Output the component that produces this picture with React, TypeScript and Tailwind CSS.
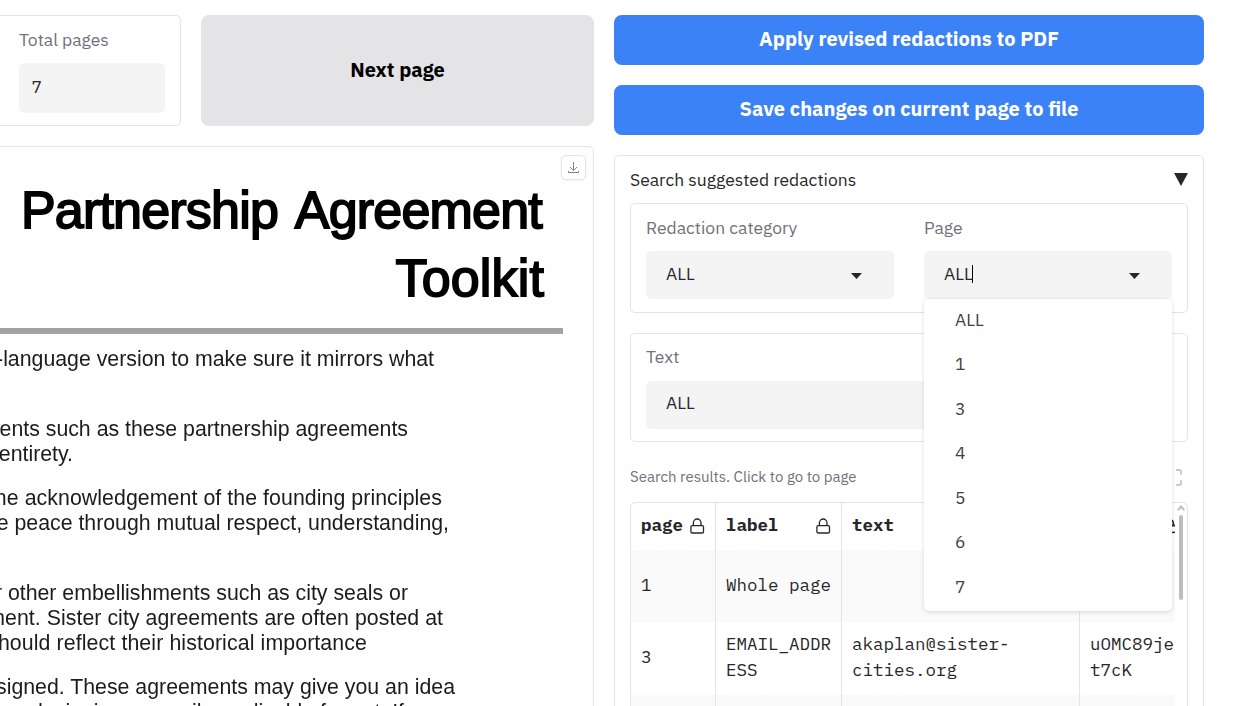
import type { ReactNode } from "react";

const pageOptions = ["ALL", "1", "3", "4", "5", "6", "7"];

function LockIcon() {
  return (
    <svg width="15" height="16" viewBox="0 0 15 16" fill="none" stroke="#27272a" strokeWidth="1.3" className="mb-[2px] shrink-0">
      <rect x="0.9" y="7.6" width="12.6" height="7.4" rx="1.3" />
      <path d="M3.4 7.6V4.8a3.8 3.8 0 0 1 7.6 0v2.8" />
    </svg>
  );
}

function Caret() {
  return (
    <svg width="12" height="6" viewBox="0 0 12 6" className="mt-px mr-[31px] shrink-0">
      <path d="M0 0h11L5.5 6z" fill="#27272a" />
    </svg>
  );
}

function Field({ label, children, className = "" }: { label: string; children: ReactNode; className?: string }) {
  return (
    <div className={`flex flex-col ${className}`}>
      <span className="mb-[10px] text-[17.5px] leading-[26px] text-[#71717a]">{label}</span>
      {children}
    </div>
  );
}

function Select({ value, caret = true, focused = false }: { value: string; caret?: boolean; focused?: boolean }) {
  return (
    <div className="flex h-12 items-center justify-between rounded-[5px] bg-[#f4f4f5] pl-5 text-[17.5px] leading-[26px] text-[#27272a]">
      <span className="-mt-[3px] flex items-center">
        {value}
        {focused && <span className="-ml-px h-[18px] w-px bg-black" />}
      </span>
      {caret && <Caret />}
    </div>
  );
}

function DocLine({ children, className }: { children: ReactNode; className: string }) {
  return <p className={`flex h-[24.8px] justify-end whitespace-pre leading-[24.8px] ${className}`}>{children}</p>;
}

function PagePreview() {
  return (
    <div className="relative -ml-5 flex h-[600px] shrink-0 flex-col overflow-hidden rounded-[5px] border border-[#e4e4e7] bg-[#fefefe] pl-[19px]">
      <div className="flex flex-col font-['Liberation_Sans',Arial,sans-serif] text-[#1c1c1c] blur-[0.45px]">
        <div className="mt-[30px] flex h-[68px] w-[542px] justify-end whitespace-nowrap text-[52px] leading-[67px] tracking-[-0.8px] text-black [-webkit-text-stroke:1.8px_black] [word-spacing:6px]">
          Partnership Agreement
        </div>
        <div className="flex h-[67px] w-[544px] justify-end text-[52px] leading-[67px] tracking-[0.15px] text-black [-webkit-text-stroke:1.8px_black]">
          Toolkit
        </div>
        <div className="mt-4 h-[6px] w-[563px] bg-[#a3a3a3]" />
        <div className="mt-[13px] text-[21.3px]">
          <DocLine className="w-[434px]">-language version to make sure it mirrors what</DocLine>
          <DocLine className="mt-[45px] w-[408px]">ents such as these partnership agreements</DocLine>
          <DocLine className="w-[73px]">entirety.</DocLine>
          <DocLine className="mt-5 w-[442px] tracking-[0.07px]">he acknowledgement of the founding principles</DocLine>
          <DocLine className="w-[449px]">e peace through mutual respect, understanding,</DocLine>
          <DocLine className="mt-[45px] w-[408px]">r other embellishments such as city seals or</DocLine>
          <DocLine className="w-[443px] tracking-[0.05px]">ment. Sister city agreements are often posted at</DocLine>
          <DocLine className="w-[367px] tracking-[0.11px]">should reflect their historical importance</DocLine>
          <DocLine className="mt-5 w-[455px]">signed. These agreements may give you an idea</DocLine>
          <DocLine className="w-[404px]">as you are designing an easily applicable format. If</DocLine>
        </div>
      </div>
      <button className="absolute right-[7px] top-2 flex h-[25px] w-[25px] items-center justify-center rounded-[5px] border border-[#e4e4e7] bg-white shadow-xs">
        <svg width="13" height="13" viewBox="0 0 13 13" fill="none" stroke="#808086" strokeWidth="1">
          <path d="M6.5 1v8.5M2.8 5.9l3.7 3.7 3.7-3.7M1.5 10v1.5h10V10" />
        </svg>
      </button>
    </div>
  );
}

function ResultsTable() {
  return (
    <div className="flex h-[230px] overflow-hidden rounded-t-[5px] border border-[#e4e4e7] font-['IBM_Plex_Mono','Liberation_Mono',monospace] text-[17.5px] leading-[26px] text-[#27272a]">
      <div className="grid w-[544px] shrink-0 grid-cols-[85px_126px_238px_95px] grid-rows-[47px_72px_73px_60px] overflow-hidden">
        <div className="flex items-center justify-between border-r border-[#e4e4e7] pl-[10px] pr-[10px] font-bold">
          <span className="-mt-1">page</span>
          <LockIcon />
        </div>
        <div className="flex items-center justify-between border-r border-[#e4e4e7] pl-[10px] pr-[10px] font-bold">
          <span className="-mt-1">label</span>
          <LockIcon />
        </div>
        <div className="flex items-center border-r border-[#e4e4e7] pl-[10px] font-bold">
          <span className="-mt-1">text</span>
        </div>
        <div className="flex items-center justify-end">
          <svg width="12" height="16" viewBox="0 0 12 16" fill="none" stroke="#27272a" className="mb-px">
            <path d="M9 2.2c1.2.6 1.4 2 1.4 5M8.6 7.6H12" strokeWidth="1.7" />
            <path d="M2 14.4H12" strokeWidth="1.5" />
          </svg>
        </div>

        <div className="flex items-center border-r border-[#e4e4e7] bg-[#fafafa] pb-[3px] pl-[10px]">1</div>
        <div className="flex items-center whitespace-nowrap border-r border-[#e4e4e7] bg-[#fafafa] pb-[3px] pl-[10px]">Whole page</div>
        <div className="border-r border-[#e4e4e7] bg-[#fafafa]" />
        <div className="bg-[#fafafa]" />

        <div className="flex items-center border-r border-[#e4e4e7] pb-[3px] pl-[10px]">3</div>
        <div className="flex items-center border-r border-[#e4e4e7] pb-[3px] pl-[10px]">
          <span>EMAIL_ADDR<br />ESS</span>
        </div>
        <div className="flex items-center border-r border-[#e4e4e7] pb-[3px] pl-[10px]">
          <span>akaplan@sister-<br />cities.org</span>
        </div>
        <div className="flex items-center pb-[3px] pl-[10px]">
          <span>uOMC89je<br />t7cK</span>
        </div>

        <div className="border-r border-[#e4e4e7] bg-[#fafafa]" />
        <div className="border-r border-[#e4e4e7] bg-[#fafafa]" />
        <div className="border-r border-[#e4e4e7] bg-[#fafafa]" />
        <div className="bg-[#fafafa]" />
      </div>
      <div className="flex flex-1 flex-col items-center pr-px pt-[2px]">
        <svg width="8" height="6" viewBox="0 0 8 6" fill="none" stroke="#bdbdbd" strokeWidth="2">
          <path d="M0.8 5.2L4 1.6l3.2 3.6" />
        </svg>
        <div className="ml-px mt-1 h-[85px] w-1 rounded-full bg-[#bdbdbd]" />
      </div>
    </div>
  );
}

export default function App() {
  return (
    <div className="flex h-[706px] w-[1245px] gap-5 overflow-hidden bg-white pt-[15px] font-['IBM_Plex_Sans',Roboto,sans-serif]">
      <div className="flex w-[594px] shrink-0 flex-col gap-5">
        <div className="flex h-[111px] shrink-0 gap-5">
          <div className="-ml-5 flex w-[201px] shrink-0 flex-col rounded-[5px] border border-[#e4e4e7] pl-[38px] pr-[15px] pt-[11px]">
            <Field label="Total pages">
              <div className="flex h-[50px] items-center rounded-[5px] bg-[#f4f4f5] pb-[2px] pl-[12.5px] text-[17.5px] text-[#27272a]">7</div>
            </Field>
          </div>
          <button className="flex-1 rounded-lg bg-[#e4e4e7] pb-[2px] text-[20px] font-bold leading-[30px] text-black">Next page</button>
        </div>
        <PagePreview />
      </div>

      <div className="flex w-[590px] shrink-0 flex-col">
        <button className="h-[50px] shrink-0 rounded-lg bg-[#3b82f6] pb-[2px] text-[20px] font-bold leading-[30px] text-white">
          Apply revised redactions to PDF
        </button>
        <button className="mt-5 h-[50px] shrink-0 rounded-lg bg-[#3b82f6] pb-[2px] text-[20px] font-bold leading-[30px] text-white">
          Save changes on current page to file
        </button>
        <div className="mt-5 flex h-[580px] shrink-0 flex-col rounded-[5px] border border-[#e4e4e7] px-[15px] pt-[10px]">
          <div className="flex h-[27px] items-center justify-between text-[17.5px] leading-[26px] text-[#27272a]">
            <span>Search suggested redactions</span>
            <svg width="14" height="13" viewBox="0 0 14 13" className="mb-px">
              <path d="M0 0h14L7 13z" fill="#27272a" />
            </svg>
          </div>

          <div className="mt-[10px] flex h-[110px] shrink-0 gap-[30px] rounded-[5px] border border-[#e4e4e7] px-[15px] pt-[11px]">
            <Field label="Redaction category" className="flex-1">
              <Select value="ALL" />
            </Field>
            <Field label="Page" className="relative flex-1">
              <Select value="ALL" focused />
              <ul className="absolute left-0 top-[84px] z-10 h-[312px] w-full rounded-[5px] bg-white text-[17.5px] text-[#3f3f46] shadow-[0_1px_4px_rgba(0,0,0,0.14)]">
                {pageOptions.map((option) => (
                  <li key={option} className="flex h-[44.5px] items-center pb-[3px] pl-[31px]">
                    {option}
                  </li>
                ))}
              </ul>
            </Field>
          </div>

          <div className="mt-5 h-[109px] shrink-0 rounded-[5px] border border-[#e4e4e7] px-[15px] pt-[10px]">
            <div className="flex flex-col">
              <span className="mb-[11px] text-[17.5px] leading-[26px] text-[#71717a]">Text</span>
              <div className="flex h-12 items-center rounded-[5px] bg-[#f4f4f5] pb-[4px] pl-5 text-[17.5px] leading-[26px] text-[#27272a]">
                ALL
              </div>
            </div>
          </div>

          <div className="mt-6 flex h-[22px] shrink-0 items-center justify-between pr-[6px] text-[15px] text-[#71717a]">
            <span>Search results. Click to go to page</span>
            <svg width="17" height="17" viewBox="0 0 17 17" fill="none" stroke="#bbbbc0" strokeWidth="1.5">
              <path d="M6 1H2.2A1.2 1.2 0 0 0 1 2.2V6M11 1h3.8A1.2 1.2 0 0 1 16 2.2V6M6 16H2.2A1.2 1.2 0 0 1 1 14.8V11M11 16h3.8a1.2 1.2 0 0 0 1.2-1.2V11" />
            </svg>
          </div>
          <div className="mt-[14px]">
            <ResultsTable />
          </div>
        </div>
      </div>
    </div>
  );
}
